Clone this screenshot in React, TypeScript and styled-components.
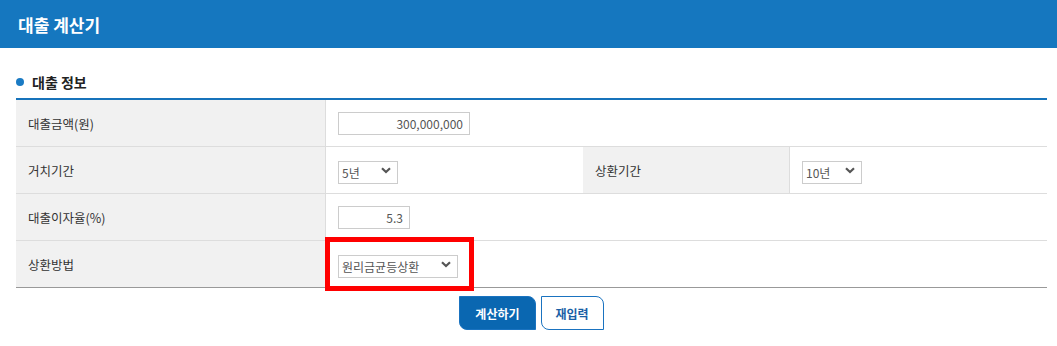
import { createGlobalStyle } from "styled-components";
import styled from "styled-components";

const GlobalStyle = createGlobalStyle`
  * { box-sizing: border-box; }
  body {
    margin: 0;
    background: #fff;
    font-family: "Noto Sans CJK KR", "Noto Sans", sans-serif;
    color: #333;
  }
`;

const Page = styled.div`
  width: 1057px;
  height: 346px;
  overflow: hidden;
`;

const TitleBar = styled.header`
  display: flex;
  align-items: center;
  height: 48px;
  padding: 0 18px;
  background: #1577bf;
  color: #fff;
  font-size: 17px;
  font-weight: 700;
  line-height: 1;
`;

const Body = styled.div`
  padding: 0 10px 0 16px;
`;

const SectionTitle = styled.h2`
  display: flex;
  align-items: center;
  gap: 8px;
  height: 52px;
  margin: 0;
  padding-top: 17px;
  border-bottom: 2px solid #1673bb;
  color: #222;
  font-size: 14px;
  font-weight: 700;
  line-height: 1;

  &::before {
    content: "";
    width: 8px;
    height: 8px;
    border-radius: 50%;
    background: #1a7bc4;
  }
`;

const Grid = styled.div`
  display: grid;
  grid-template-columns: 310px 257px 207px 1fr;
  border-bottom: 1px solid #999;
`;

const Label = styled.div<{ $last?: boolean }>`
  display: flex;
  align-items: center;
  height: ${({ $last }) => ($last ? "46px" : "47px")};
  padding-left: 12px;
  background: #f1f1f1;
  border-right: 1px solid #ddd;
  border-bottom: ${({ $last }) => ($last ? "0" : "1px solid #ddd")};
  font-size: 12.5px;
  color: #333;
`;

const Value = styled.div<{ $span?: number; $last?: boolean }>`
  position: relative;
  display: flex;
  align-items: center;
  height: ${({ $last }) => ($last ? "46px" : "47px")};
  padding-left: 12px;
  grid-column: span ${({ $span }) => $span ?? 1};
  border-bottom: ${({ $last }) => ($last ? "0" : "1px solid #ddd")};
`;

const NumInput = styled.input<{ $w: number }>`
  width: ${({ $w }) => $w}px;
  height: 23px;
  padding: 0 6px;
  border: 1px solid #ccc;
  text-align: right;
  font-family: inherit;
  font-size: 12px;
  color: #555;
  outline: none;
`;

const SelectWrap = styled.div<{ $w: number }>`
  position: relative;
  width: ${({ $w }) => $w}px;
  height: 23px;
`;

const Select = styled.select`
  width: 100%;
  height: 100%;
  padding: 0 0 0 3px;
  border: 1px solid #ccc;
  border-radius: 0;
  background: #fff;
  appearance: none;
  font-family: inherit;
  font-size: 12px;
  color: #555;
  outline: none;
`;

const Chevron = styled.svg`
  position: absolute;
  top: 8px;
  right: 7px;
  pointer-events: none;
`;

const Highlight = styled.div`
  position: absolute;
  top: -4px;
  left: -1px;
  width: 149px;
  height: 54px;
  border: 5px solid #f00;
  pointer-events: none;
`;

const Buttons = styled.div`
  display: flex;
  justify-content: center;
  gap: 5px;
  padding-top: 8px;
`;

const Button = styled.button<{ $primary?: boolean }>`
  height: 34px;
  padding: 0 ${({ $primary }) => ($primary ? "15px" : "14px")};
  border: 1px solid #1a73c0;
  border-radius: 0 8px 0 8px;
  background: ${({ $primary }) => ($primary ? "#0a67b1" : "#fff")};
  color: ${({ $primary }) => ($primary ? "#fff" : "#1a5fa6")};
  font-family: inherit;
  font-size: 12px;
  font-weight: 700;
`;

function DropDown({ width, value, options }: { width: number; value: string; options: string[] }) {
  return (
    <SelectWrap $w={width}>
      <Select defaultValue={value}>
        {options.map((o) => (
          <option key={o}>{o}</option>
        ))}
      </Select>
      <Chevron width="10" height="7" viewBox="0 0 10 7">
        <path d="M1 1.2 L5 5 L9 1.2" fill="none" stroke="#555" strokeWidth="2.2" />
      </Chevron>
    </SelectWrap>
  );
}

export default function App() {
  return (
    <Page>
      <GlobalStyle />
      <TitleBar>대출 계산기</TitleBar>
      <Body>
        <SectionTitle>대출 정보</SectionTitle>
        <Grid>
          <Label>대출금액(원)</Label>
          <Value $span={3}>
            <NumInput $w={132} defaultValue="300,000,000" />
          </Value>

          <Label>거치기간</Label>
          <Value>
            <DropDown width={60} value="5년" options={["1년", "2년", "3년", "4년", "5년"]} />
          </Value>
          <Label>상환기간</Label>
          <Value>
            <DropDown width={60} value="10년" options={["5년", "10년", "15년", "20년"]} />
          </Value>

          <Label>대출이자율(%)</Label>
          <Value $span={3}>
            <NumInput $w={72} defaultValue="5.3" />
          </Value>

          <Label $last>상환방법</Label>
          <Value $span={3} $last>
            <DropDown width={120} value="원리금균등상환" options={["원리금균등상환", "원금균등상환", "만기일시상환"]} />
            <Highlight />
          </Value>
        </Grid>
        <Buttons>
          <Button $primary>계산하기</Button>
          <Button>재입력</Button>
        </Buttons>
      </Body>
    </Page>
  );
}
